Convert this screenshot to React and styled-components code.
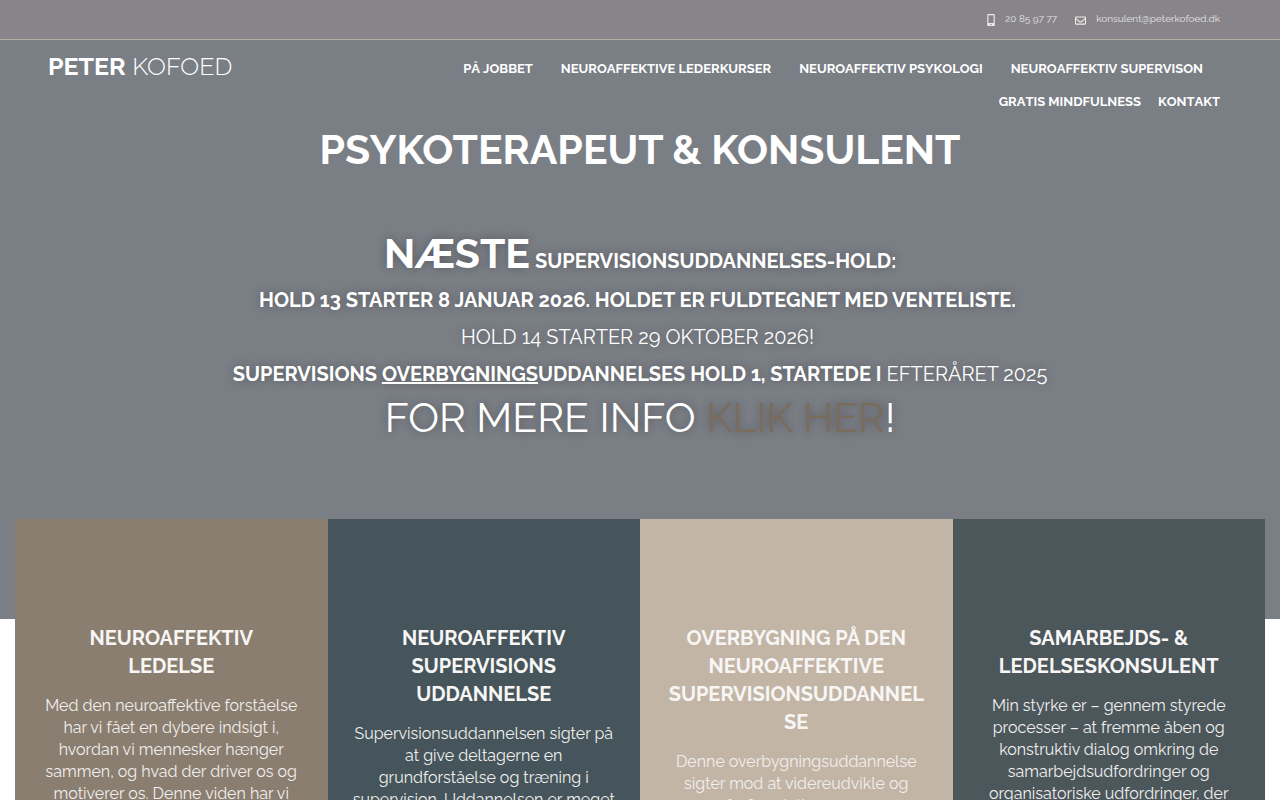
import React from 'react'
import styled, { createGlobalStyle } from 'styled-components'
import { FaMobileAlt, FaRegEnvelope } from 'react-icons/fa'

const navItems = [
  { label: 'På jobbet', wide: false },
  { label: 'Neuroaffektive lederkurser', wide: true },
  { label: 'Neuroaffektiv psykologi', wide: true },
  { label: 'Neuroaffektiv supervison', wide: true },
  { label: 'Gratis mindfulness', wide: false },
  { label: 'Kontakt', wide: false },
]

const cards = [
  {
    color: '#8a7e70',
    title: 'Neuroaffektiv\nledelse',
    text: 'Med den neuroaffektive forståelse har vi fået en dybere indsigt i, hvordan vi mennesker hænger sammen, og hvad der driver os og motiverer os. Denne viden har vi',
  },
  {
    color: '#45555b',
    title: 'Neuroaffektiv supervisions uddannelse',
    text: 'Supervisionsuddannelsen sigter på at give deltagerne en grundforståelse og træning i supervision. Uddannelsen er meget',
  },
  {
    color: '#c3b5a6',
    title: 'Overbygning på den neuroaffektive supervisionsuddannelse',
    text: 'Denne overbygningsuddannelse sigter mod at videreudvikle og forfine deltagernes',
  },
  {
    color: '#4c575c',
    title: 'Samarbejds- & ledelseskonsulent',
    text: 'Min styrke er – gennem styrede processer – at fremme åben og konstruktiv dialog omkring de samarbejdsudfordringer og organisatoriske udfordringer, der',
  },
]

const App = () => {
  return (
    <>
      <GlobalStyle />
      <Hero>
        <TopBar>
          <Contact href="tel:20859777">
            <PhoneIcon />
            20 85 97 77
          </Contact>
          <Contact href="mailto:konsulent@peterkofoed.dk">
            <MailIcon />
            konsulent@peterkofoed.dk
          </Contact>
        </TopBar>
        <Header>
          <Logo href="#"><b>Peter</b> Kofoed</Logo>
          <Nav>
            {navItems.map(item => (
              <NavLink href="#" key={item.label} $wide={item.wide}>{item.label}</NavLink>
            ))}
          </Nav>
        </Header>
        <Title>Psykoterapeut &amp; konsulent</Title>
        <Notice>
          <Line><Big><b>Næste</b></Big> <b>supervisionsuddannelses-hold:</b></Line>
          <Line><b>Hold 13 starter 8 januar 2026. Holdet er fuldtegnet med venteliste.</b>&nbsp;</Line>
          <Line>Hold 14 starter 29 oktober 2026!&nbsp;</Line>
          <Line><b>Supervisions <u>overbygnings</u>uddannelses hold 1, startede i</b> efteråret 2025</Line>
          <Line><Big>For mere info <a href="#">klik her</a>!</Big></Line>
        </Notice>
      </Hero>
      <Cards>
        {cards.map(card => (
          <Card key={card.title} $color={card.color}>
            <h2>{card.title}</h2>
            <p>{card.text}</p>
          </Card>
        ))}
      </Cards>
    </>
  )
}

export default App

const GlobalStyle = createGlobalStyle`
  * {
    box-sizing: border-box;
  }

  body {
    margin: 0;
    background-color: #fff;
    color: #fff;
    font-family: Raleway, Lato, sans-serif;
  }

  a {
    color: inherit;
    text-decoration: none;
  }
`

const Hero = styled.div`
  padding-bottom: 175px;
  background: #7a7e85;
`

const TopBar = styled.div`
  display: flex;
  justify-content: flex-end;
  gap: 18px;
  height: 40px;
  padding: 0 60px;
  background-color: #878589;
  border-bottom: 1px solid #b5b0a6;
`

const Contact = styled.a`
  display: flex;
  align-items: center;
  gap: 10px;
  padding-bottom: 2px;
  font-size: 10px;
  color: #e4e2e0;
`

const PhoneIcon = styled(FaMobileAlt)`
  width: 8px;
  height: 12px;
  margin-top: 3px;
  color: #efece6;
`

const MailIcon = styled(FaRegEnvelope)`
  width: 11px;
  height: 11px;
  margin-top: 3px;
  color: #efece6;
`

const Header = styled.header`
  display: flex;
  justify-content: space-between;
  align-items: flex-start;
  padding: 12px 60px 0 48px;
`

const Logo = styled.a`
  font-size: 25px;
  line-height: 28px;
  font-weight: 300;
  text-transform: uppercase;
  white-space: nowrap;

  b {
    font-weight: 700;
  }
`

const Nav = styled.nav`
  display: flex;
  flex-wrap: wrap;
  justify-content: flex-end;
  flex: 0 1 800px;
`

const NavLink = styled.a`
  margin-right: 17px;
  margin-left: ${props => (props.$wide ? '11px' : '0')};
  font-size: 13px;
  line-height: 33px;
  font-weight: 700;
  font-kerning: none;
  text-transform: uppercase;

  &:last-child {
    margin-right: 0;
  }
`

const Title = styled.h1`
  margin: 0;
  font-size: 41px;
  line-height: 64px;
  font-weight: 700;
  text-align: center;
  text-transform: uppercase;
`

const Notice = styled.div`
  padding-top: 47px;
  text-align: center;
  text-transform: uppercase;
  text-shadow: 0 0 10px rgba(0, 0, 0, 0.3);
`

const Line = styled.p`
  margin: 0;
  font-size: 20px;
  line-height: 37px;

  &:first-child {
    margin-bottom: 2px;
  }

  a {
    color: #7a6c5d;
  }
`

const Big = styled.span`
  font-size: 41px;
  line-height: 49px;
`

const Cards = styled.div`
  display: grid;
  grid-template-columns: repeat(4, 1fr);
  margin: -100px 15px 0;
`

const Card = styled.section`
  min-width: 0;
  padding: 105px 25px 60px;
  background-color: ${props => props.$color};
  text-align: center;

  h2 {
    margin: 0 0 15px;
    font-size: 20px;
    line-height: 28px;
    font-weight: 700;
    text-transform: uppercase;
    white-space: pre-line;
    overflow-wrap: break-word;
    color: #f7f6f5;
  }

  p {
    margin: 0;
    font-size: 16px;
    line-height: 22px;
    color: #f0efed;
  }
`
